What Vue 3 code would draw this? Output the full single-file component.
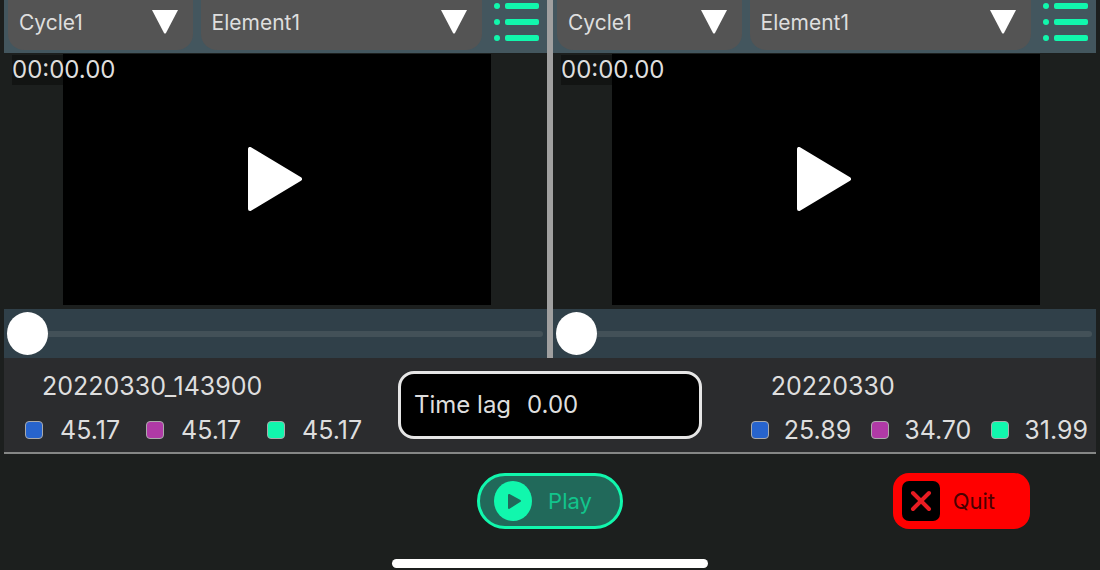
<script setup>
import { ref } from 'vue'

const panes = ref([
  { id: 'left', position: 0 },
  { id: 'right', position: 0 },
])

const records = [
  { id: 'first', name: '20220330_143900', values: ['45.17', '45.17', '45.17'] },
  { id: 'second', name: '20220330', values: ['25.89', '34.70', '31.99'] },
]

const colours = ['blue', 'purple', 'green']
const timeLag = ref('0.00')
</script>

<template>
  <div class="app">
    <main class="compare">
      <section v-for="pane in panes" :key="pane.id" class="pane">
        <div class="toolbar">
          <div class="picker cycle">
            <select aria-label="Cycle">
              <option>Cycle1</option>
            </select>
            <svg class="arrow" viewBox="0 0 26 24" aria-hidden="true"><path d="M0 0H26L14 23Q13 24 12 23Z" /></svg>
          </div>
          <div class="picker element">
            <select aria-label="Element">
              <option>Element1</option>
            </select>
            <svg class="arrow" viewBox="0 0 26 24" aria-hidden="true"><path d="M0 0H26L14 23Q13 24 12 23Z" /></svg>
          </div>
          <button class="list" type="button" aria-label="List">
            <svg viewBox="0 0 46 44" aria-hidden="true">
              <g v-for="y in [6, 22, 38]" :key="y">
                <circle cx="3" :cy="y" r="3" />
                <rect x="11" :y="y - 3" width="34" height="6" rx="2" />
              </g>
            </svg>
          </button>
        </div>

        <div class="stage">
          <button class="video" type="button" aria-label="Play video">
            <svg viewBox="0 0 60 66" aria-hidden="true"><path d="M3 2V62L53 32Z" /></svg>
          </button>
          <span class="time">00:00.00</span>
        </div>

        <div class="seek">
          <input v-model="pane.position" type="range" min="0" max="100" aria-label="Position" />
        </div>
      </section>
    </main>

    <section class="info">
      <div v-for="record in records" :key="record.id" class="record" :class="record.id">
        <div class="name">{{ record.name }}</div>
        <div class="stats">
          <div v-for="(value, i) in record.values" :key="i" class="stat">
            <i class="swatch" :class="colours[i]"></i>
            <span>{{ value }}</span>
          </div>
        </div>
      </div>
      <div class="lag">
        <label for="lag">Time lag</label>
        <input id="lag" v-model="timeLag" type="text" />
      </div>
    </section>

    <footer class="actions">
      <button class="play" type="button">
        <svg viewBox="0 0 38 40" aria-hidden="true">
          <ellipse cx="19" cy="20" rx="19" ry="20" />
          <path d="M15 14V27L26 20Z" />
        </svg>
        Play
      </button>
      <button class="quit" type="button">
        <svg viewBox="0 0 38 40" aria-hidden="true">
          <rect width="38" height="40" rx="7" />
          <path d="M11 12L27 28M27 12L11 28" />
        </svg>
        Quit
      </button>
    </footer>
    <div class="home"></div>
  </div>
</template>

<style>
body {
  margin: 0;
  background: #1c1f1e;
}
</style>

<style scoped>
.app {
  box-sizing: border-box;
  min-height: 100vh;
  display: flex;
  flex-direction: column;
  padding: 0 4px 2px;
  background: #1c1f1e;
  color: #dedede;
  font: 24px/30px Inter, Roboto, sans-serif;
}
button,
select,
input {
  font: inherit;
  color: inherit;
  border: 0;
  margin: 0;
  padding: 0;
  background: none;
}
svg {
  display: block;
}
.compare {
  display: flex;
}
.pane {
  flex: 1;
  min-width: 0;
}
.pane + .pane {
  border-left: 6px solid #a0a0a0;
}
.toolbar {
  display: flex;
  gap: 8px;
  height: 53px;
  box-sizing: border-box;
  padding: 0 7px 3px 4px;
  background: #43565e;
}
.picker {
  position: relative;
  border-radius: 0 0 16px 16px;
  background: #545454;
}
.cycle {
  flex: 185;
}
.element {
  flex: 282;
}
.picker select {
  width: 100%;
  height: 100%;
  box-sizing: border-box;
  appearance: none;
  padding: 0 44px 4px 11px;
  font-size: 21px;
}
.arrow {
  position: absolute;
  top: 10px;
  right: 15px;
  width: 26px;
  height: 24px;
  fill: #fff;
  pointer-events: none;
}
.list {
  flex: none;
  width: 46px;
  height: 44px;
  margin-left: 4px;
  fill: #11f7ad;
}
.stage {
  position: relative;
  height: 256px;
  box-sizing: border-box;
  padding: 1px 56px 4px 59px;
}
.video {
  display: flex;
  align-items: center;
  justify-content: center;
  width: 100%;
  height: 100%;
  background: #000;
}
.video svg {
  width: 60px;
  height: 66px;
  fill: #fff;
  stroke: #fff;
  stroke-width: 4px;
  stroke-linejoin: round;
}
.time {
  position: absolute;
  top: 2px;
  left: 8px;
  background: rgba(0, 0, 0, 0.35);
}
.seek {
  display: flex;
  align-items: center;
  height: 49px;
  padding: 0 4px 0 3px;
  background: #304049;
}
.seek input {
  width: 100%;
  height: 44px;
  appearance: none;
}
.seek input::-webkit-slider-runnable-track {
  height: 6px;
  border-radius: 3px;
  background: #435158;
}
.seek input::-webkit-slider-thumb {
  appearance: none;
  width: 41px;
  height: 43px;
  margin-top: -19px;
  border-radius: 50%;
  background: #fff;
}
.info {
  display: grid;
  grid-template-columns: 1fr 304px 1fr;
  padding: 13px 8px 7px;
  border-bottom: 2px solid #858786;
  background: #2b2c2e;
}
.record {
  grid-row: 1;
  font-size: 25px;
}
.first {
  grid-column: 1;
  padding-left: 13px;
}
.second {
  grid-column: 3;
  justify-self: end;
}
.name {
  padding-left: 17px;
  margin-bottom: 14px;
}
.second .name {
  padding-left: 20px;
}
.stats {
  display: flex;
  gap: 26px;
}
.second .stats {
  gap: 20px;
}
.stat {
  display: flex;
  align-items: center;
  gap: 17px;
}
.second .stat {
  gap: 15px;
}
.swatch {
  box-sizing: border-box;
  width: 18px;
  height: 18px;
  border: 1px solid #aaa;
  border-radius: 4px;
}
.blue {
  background: #2764cd;
}
.purple {
  background: #b03aa6;
}
.green {
  background: #11f7ad;
}
.lag {
  grid-row: 1;
  grid-column: 2;
  align-self: start;
  display: flex;
  align-items: center;
  gap: 16px;
  box-sizing: border-box;
  height: 68px;
  padding: 0 13px;
  border: 3px solid #e6e6e6;
  border-radius: 16px;
  background: #000;
}
.lag label {
  flex: none;
}
.lag input {
  flex: 1;
  min-width: 0;
}
.actions {
  display: grid;
  grid-template-columns: 1fr auto 1fr;
  padding: 19px 66px 0;
}
.actions button {
  display: flex;
  align-items: center;
  box-sizing: border-box;
  height: 56px;
  font-size: 22px;
}
.actions svg {
  width: 38px;
  height: 40px;
}
.actions .play {
  grid-column: 2;
  gap: 16px;
  padding: 0 28px 0 14px;
  border: 3px solid #11f7ad;
  border-radius: 28px;
  background: #21695a;
  color: #12c58c;
}
.play ellipse {
  fill: #11f7ad;
}
.play path {
  fill: #21695a;
  stroke: #21695a;
  stroke-width: 2px;
  stroke-linejoin: round;
}
.actions .quit {
  justify-self: end;
  gap: 13px;
  padding: 0 35px 0 9px;
  border-radius: 16px;
  background: #f00;
  color: #4a0000;
}
.quit path {
  fill: none;
  stroke: #e81c22;
  stroke-width: 4px;
  stroke-linecap: round;
}
.home {
  align-self: center;
  width: 29%;
  height: 9px;
  margin-top: auto;
  border-radius: 5px;
  background: #fff;
}
</style>
